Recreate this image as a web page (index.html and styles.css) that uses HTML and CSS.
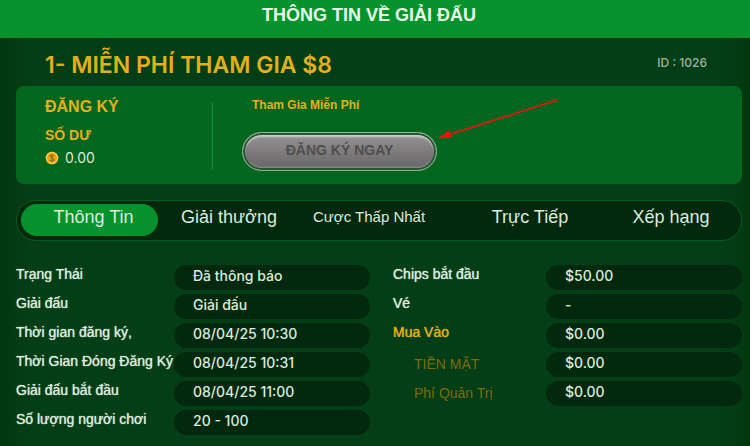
FILE: index.html
```html
<!DOCTYPE html>
<html lang="vi">
<head>
  <meta charset="UTF-8" />
  <meta name="viewport" content="width=device-width, initial-scale=1" />
  <title>Thông tin về giải đấu</title>
  <link rel="stylesheet" href="styles.css">
</head>
<body>
  <header class="topbar">THÔNG TIN VỀ GIẢI ĐẤU</header>

  <main class="page">
    <div class="title-row">
      <h1>1- MIỄN PHÍ THAM GIA $8</h1>
      <span class="game-id">ID : 1026</span>
    </div>

    <section class="card">
      <div class="balance">
        <h2>ĐĂNG KÝ</h2>
        <h3>SỐ DƯ</h3>
        <div class="amount">
          <svg class="coin" viewBox="0 0 14 14" aria-hidden="true">
            <circle cx="7" cy="7" r="6.3" fill="#e3a51c" />
            <circle cx="7" cy="7" r="5.6" fill="none" stroke="#f3cf4e" stroke-width="1.2" />
            <path d="M9 4.8C8.4 4 5.3 3.8 5.3 5.5S8.9 6.7 8.9 8.5 5.5 10.1 4.9 9.1M7 3.3v7.4" fill="none" stroke="#a0690c" stroke-width="1.1" />
          </svg>
          <span>0.00</span>
        </div>
      </div>
      <div class="register">
        <p>Tham Gia Miễn Phí</p>
        <button class="register-btn" type="button">ĐĂNG KÝ NGAY</button>
      </div>
      <svg class="arrow" viewBox="0 0 120 42" aria-hidden="true">
        <path d="M118 2 12 36" stroke="#c6200f" stroke-width="2" stroke-linecap="round" />
        <path d="M0 40 10 33 12 39Z" fill="#f01408" stroke="#f01408" />
      </svg>
    </section>

    <nav class="tabs">
      <button class="tab active" type="button">Thông Tin</button>
      <button class="tab" type="button">Giải thưởng</button>
      <button class="tab small" type="button">Cược Thấp Nhất</button>
      <button class="tab" type="button">Trực Tiếp</button>
      <button class="tab" type="button">Xếp hạng</button>
    </nav>

    <div class="details">
      <dl>
        <dt>Trạng Thái</dt><dd>Đã thông báo</dd>
        <dt>Giải đấu</dt><dd>Giải đấu</dd>
        <dt>Thời gian đăng ký,</dt><dd>08/04/25 10:30</dd>
        <dt>Thời Gian Đóng Đăng Ký</dt><dd>08/04/25 10:31</dd>
        <dt>Giải đấu bắt đầu</dt><dd>08/04/25 11:00</dd>
        <dt>Số lượng người chơi</dt><dd>20 - 100</dd>
      </dl>
      <dl>
        <dt>Chips bắt đầu</dt><dd>$50.00</dd>
        <dt>Vé</dt><dd>-</dd>
        <dt class="gold">Mua Vào</dt><dd>$0.00</dd>
        <dt class="sub">TIỀN MẶT</dt><dd>$0.00</dd>
        <dt class="sub">Phí Quản Trị</dt><dd>$0.00</dd>
      </dl>
    </div>
  </main>
</body>
</html>
```
FILE: styles.css
```css
:root {
  --bg: #043e16;
  --bar: #06932d;
  --card: #05661f;
  --pill: #02290d;
  --gold: #e2b01c;
  --text: #dcebdc;
}

* {
  box-sizing: border-box;
}

body {
  margin: 0;
  min-height: 100vh;
  font-family: "Liberation Sans", Arial, sans-serif;
  background: linear-gradient(90deg, #03380f, var(--bg) 4%, var(--bg) 96%, #03380f);
  color: var(--text);
}

h1, h2, h3, p, dl, dd {
  margin: 0;
}

.topbar {
  height: 38px;
  padding: 5px 12px 0 0;
  background: var(--bar);
  border-bottom: 1px solid #1f8437;
  color: #e4fbe6;
  font-size: 18px;
  font-weight: bold;
  line-height: 20px;
  text-align: center;
}

.page {
  padding: 0 8px 8px 16px;
}

.title-row {
  display: flex;
  justify-content: space-between;
  align-items: center;
  height: 48px;
  padding: 6px 35px 0 29px;
}

h1 {
  color: var(--gold);
  font-family: Inter, sans-serif;
  font-size: 23px;
  font-weight: 600;
  line-height: 32px;
}

.game-id {
  padding-bottom: 6px;
  color: #9fb3a1;
  font-family: Inter, sans-serif;
  font-size: 12px;
  font-weight: 500;
}

.card {
  position: relative;
  display: flex;
  height: 98px;
  padding: 10px 0 12px 29px;
  background: var(--card);
  border-radius: 8px;
}

.balance {
  width: 168px;
  margin: 6px 0 2px;
  border-right: 1px solid #0a9433;
}

h2, h3, .register p {
  color: var(--gold);
}

h2 {
  margin-top: -6px;
  font-size: 16px;
  line-height: 22px;
}

h3 {
  margin-top: 8px;
  font-size: 14px;
  line-height: 18px;
}

.amount {
  display: flex;
  align-items: center;
  gap: 6px;
  margin-top: 4px;
  font-family: Inter, sans-serif;
  font-size: 14px;
  line-height: 20px;
}

.coin {
  width: 14px;
  height: 14px;
}

.register {
  padding-left: 29px;
}

.register p {
  padding-left: 10px;
  font-size: 12px;
  font-weight: bold;
  line-height: 18px;
}

.register-btn {
  display: block;
  width: 195px;
  height: 39px;
  margin-top: 18px;
  padding: 0 0 4px;
  border: 1px solid #8fb597;
  border-radius: 20px;
  background: linear-gradient(#b5b5b5, #928f90 10%, #666364);
  box-shadow: inset 0 0 0 2px #2a5534, inset 0 3px 2px 1px #c8d2c9, inset 0 -2px 2px 1px #8c958d;
  color: #4f4d4e;
  font-family: "Liberation Sans", Arial, sans-serif;
  font-size: 14px;
  font-weight: bold;
  line-height: 20px;
}

/* pointer drawn over the card */
.arrow {
  position: absolute;
  left: 423px;
  top: 12px;
  width: 120px;
  height: 42px;
}

.tabs {
  display: grid;
  grid-template-columns: 137fr 142fr 138fr 184fr 98fr;
  height: 41px;
  margin-top: 16px;
  padding: 3px 21px 4px 4px;
  background: var(--pill);
  border: 1px solid #0b5a23;
  border-radius: 20px;
}

.tab {
  padding: 0 0 6px;
  border: none;
  border-radius: 16px;
  background: none;
  color: var(--text);
  font-family: "Liberation Sans", Arial, sans-serif;
  font-size: 18px;
  line-height: 20px;
  white-space: nowrap;
}

.tab.active {
  padding-left: 8px;
  background: var(--bar);
}

.tab.small {
  font-size: 15px;
}

.details {
  display: grid;
  grid-template-columns: 354fr 349fr;
  gap: 23px;
  margin-top: 24px;
}

dl {
  display: grid;
  grid-template-columns: 158px 1fr;
  grid-auto-rows: 25px;
  row-gap: 4px;
  align-content: start;
}

dl + dl {
  grid-template-columns: 153px 1fr;
}

dt {
  font-size: 14px;
  line-height: 18px;
  text-shadow: 0 0 1px currentColor;
  white-space: nowrap;
}

dd {
  padding-left: 19px;
  border-radius: 13px;
  background: var(--pill);
  font-family: Inter, sans-serif;
  font-size: 14px;
  font-weight: 500;
  line-height: 22px;
}

.gold {
  color: var(--gold);
}

.sub {
  padding: 3px 0 0 21px;
  color: #7c6c14;
  text-shadow: none;
}
```
